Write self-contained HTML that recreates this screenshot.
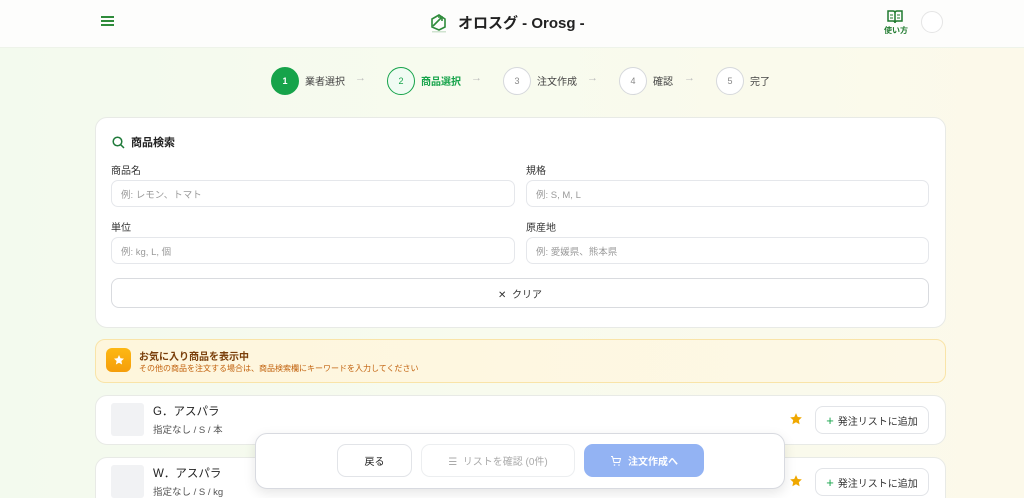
<!DOCTYPE html>
<html style="overflow:hidden;height:498px"><head><meta charset="utf-8"><style>
*{box-sizing:border-box;margin:0;padding:0}
body{width:1024px;height:498px;overflow:hidden;font-family:"Liberation Sans","Noto Sans CJK JP",sans-serif;background:linear-gradient(90deg,#f3faee 0%,#f8fbee 50%,#fcf9ea 100%);position:relative;color:#222}
.abs{position:absolute}
header{position:absolute;left:0;top:0;width:1024px;height:48px;background:#fdfdfc;border-bottom:1px solid #eef3ea}
.step{position:absolute;top:67px;width:28px;height:28px;border-radius:50%;border:1.5px solid #d6d8dc;font-size:9px;color:#888;display:flex;align-items:center;justify-content:center;background:#fff}
.sl{position:absolute;top:73px;font-size:10px;color:#444}
.arr{position:absolute;top:72px;font-size:11px;color:#bbb}
.card{position:absolute;background:#fff;border:1px solid #e8eae6;border-radius:12px}
.lbl{position:absolute;font-size:10px;color:#333}
.inp{position:absolute;height:27px;border:1px solid #e5e7eb;border-radius:7px;background:#fff;font-size:9.5px;color:#9a9a9a;padding:6px 9px}
.btn{position:absolute;border:1px solid #e2e4e8;border-radius:8px;background:#fff;font-size:10px;display:flex;align-items:center;justify-content:center}
</style></head><body>
<header>
<div class="abs" style="left:101px;top:16px;width:13px;height:2px;background:#2e8b3a;box-shadow:0 4px 0 #2e8b3a,0 8px 0 #2e8b3a"></div>
<svg class="abs" style="left:429px;top:11px" width="20" height="22" viewBox="0 0 20 22"><path d="M3 8 L10 4 L16 8 L16 16 L10 19 L3 16 Z" fill="none" stroke="#2e8b3a" stroke-width="1.6"/><path d="M4 15 L12 7 M9 6 L13 6 L13 10" fill="none" stroke="#2e8b3a" stroke-width="1.6"/><rect x="3" y="20" width="14" height="1.5" fill="#cfe3cf"/></svg>
<div class="abs" style="left:458px;top:12px;font-size:15px;font-weight:bold;color:#222">オロスグ - Orosg -</div>
<svg class="abs" style="left:887px;top:10px" width="16" height="14" viewBox="0 0 16 14"><path d="M1 1 H6 Q8 1 8 3 V13 Q8 11 6 11 H1 Z M15 1 H10 Q8 1 8 3 V13 Q8 11 10 11 H15 Z" fill="none" stroke="#1f7a2e" stroke-width="1.5"/><path d="M3 5H6M3 8H6M10 5H13M10 8H13" stroke="#1f7a2e" stroke-width="1"/></svg>
<div class="abs" style="left:884px;top:25px;font-size:8px;color:#1f7a2e;font-weight:bold">使い方</div>
<div class="abs" style="left:921px;top:11px;width:22px;height:22px;border-radius:50%;border:1px solid #e5e5e5;background:#fff"></div>
</header>

<div class="step" style="left:271px;background:#16a34a;border-color:#16a34a;color:#fff;font-weight:bold">1</div>
<div class="sl" style="left:305px">業者選択</div><div class="arr" style="left:355px">→</div>
<div class="step" style="left:387px;border-color:#16a34a;color:#16a34a;background:#f0fbf3">2</div>
<div class="sl" style="left:421px;color:#16a34a;font-weight:bold">商品選択</div><div class="arr" style="left:471px">→</div>
<div class="step" style="left:503px">3</div>
<div class="sl" style="left:537px">注文作成</div><div class="arr" style="left:587px">→</div>
<div class="step" style="left:619px">4</div>
<div class="sl" style="left:653px">確認</div><div class="arr" style="left:684px">→</div>
<div class="step" style="left:716px">5</div>
<div class="sl" style="left:750px">完了</div>

<div class="card" style="left:95px;top:117px;width:851px;height:211px"></div>
<svg class="abs" style="left:112px;top:136px" width="13" height="13" viewBox="0 0 13 13"><circle cx="5.5" cy="5.5" r="4.3" fill="none" stroke="#1f7a3a" stroke-width="1.5"/><path d="M8.7 8.7L12 12" stroke="#1f7a3a" stroke-width="1.5"/></svg>
<div class="abs" style="left:131px;top:134px;font-size:11px;font-weight:bold;color:#222">商品検索</div>
<div class="lbl" style="left:111px;top:162px">商品名</div>
<div class="lbl" style="left:526px;top:162px">規格</div>
<div class="inp" style="left:111px;top:180px;width:404px">例: レモン、トマト</div>
<div class="inp" style="left:526px;top:180px;width:403px">例: S, M, L</div>
<div class="lbl" style="left:111px;top:219px">単位</div>
<div class="lbl" style="left:526px;top:219px">原産地</div>
<div class="inp" style="left:111px;top:237px;width:404px">例: kg, L, 個</div>
<div class="inp" style="left:526px;top:237px;width:403px">例: 愛媛県、熊本県</div>
<div class="btn" style="left:111px;top:278px;width:818px;height:30px;border-color:#d9dbdf;color:#333">✕&nbsp; クリア</div>

<div class="abs" style="left:95px;top:339px;width:851px;height:44px;background:linear-gradient(90deg,#fef6dc,#fdf8e6);border:1px solid #f9e4a8;border-radius:10px"></div>
<div class="abs" style="left:106px;top:348px;width:25px;height:24px;border-radius:6px;background:linear-gradient(#fdb813,#f59e0b);display:flex;align-items:center;justify-content:center"><svg width="12" height="12" viewBox="0 0 24 24"><path d="M12 2l3 6.5 7 .8-5.2 4.8 1.4 7L12 17.6 5.8 21l1.4-7L2 9.3l7-.8z" fill="#fff"/></svg></div>
<div class="abs" style="left:139px;top:348px;font-size:10px;font-weight:bold;color:#7a3e0a">お気に入り商品を表示中</div>
<div class="abs" style="left:139px;top:363px;font-size:8px;color:#c2620e">その他の商品を注文する場合は、商品検索欄にキーワードを入力してください</div>

<div class="card" style="left:95px;top:395px;width:851px;height:50px"></div>
<div class="abs" style="left:111px;top:403px;width:33px;height:33px;background:#f1f2f4;border-radius:3px"></div>
<div class="abs" style="left:153px;top:403px;font-size:11.5px;color:#222">G．アスパラ</div>
<div class="abs" style="left:153px;top:422px;font-size:9.5px;color:#555">指定なし / S / 本</div>
<svg class="abs" style="left:789px;top:412px" width="14" height="14" viewBox="0 0 24 24"><path d="M12 2l3 6.5 7 .8-5.2 4.8 1.4 7L12 17.6 5.8 21l1.4-7L2 9.3l7-.8z" fill="#f0a800"/></svg>
<div class="btn" style="left:815px;top:406px;width:114px;height:28px;color:#333"><span style="color:#16a34a;font-size:13px;margin-right:4px">+</span>発注リストに追加</div>

<div class="card" style="left:95px;top:457px;width:851px;height:60px"></div>
<div class="abs" style="left:111px;top:465px;width:33px;height:33px;background:#f1f2f4;border-radius:3px"></div>
<div class="abs" style="left:153px;top:465px;font-size:11.5px;color:#222">W．アスパラ</div>
<div class="abs" style="left:153px;top:484px;font-size:9.5px;color:#555">指定なし / S / kg</div>
<svg class="abs" style="left:789px;top:474px" width="14" height="14" viewBox="0 0 24 24"><path d="M12 2l3 6.5 7 .8-5.2 4.8 1.4 7L12 17.6 5.8 21l1.4-7L2 9.3l7-.8z" fill="#f0a800"/></svg>
<div class="btn" style="left:815px;top:468px;width:114px;height:28px;color:#333"><span style="color:#16a34a;font-size:13px;margin-right:4px">+</span>発注リストに追加</div>

<div class="abs" style="left:255px;top:433px;width:530px;height:56px;background:#fff;border:1px solid #d8dae0;border-radius:12px;box-shadow:0 4px 12px rgba(0,0,0,0.1)"></div>
<div class="btn" style="left:337px;top:444px;width:75px;height:33px;border-radius:9px;color:#222">戻る</div>
<div class="btn" style="left:421px;top:444px;width:154px;height:33px;border-radius:9px;color:#aaa;border-color:#eceef0">☰&nbsp; リストを確認 (0件)</div>
<div class="btn" style="left:584px;top:444px;width:120px;height:33px;border-radius:9px;background:#93b3f3;border-color:#93b3f3;color:#fff;font-weight:bold"><svg width="12" height="12" viewBox="0 0 24 24" style="margin-right:6px"><path d="M2 3h3l3 12h11l2-8H6" fill="none" stroke="#fff" stroke-width="2"/><circle cx="9" cy="20" r="1.6" fill="#fff"/><circle cx="18" cy="20" r="1.6" fill="#fff"/></svg>注文作成へ</div>
</body></html>
